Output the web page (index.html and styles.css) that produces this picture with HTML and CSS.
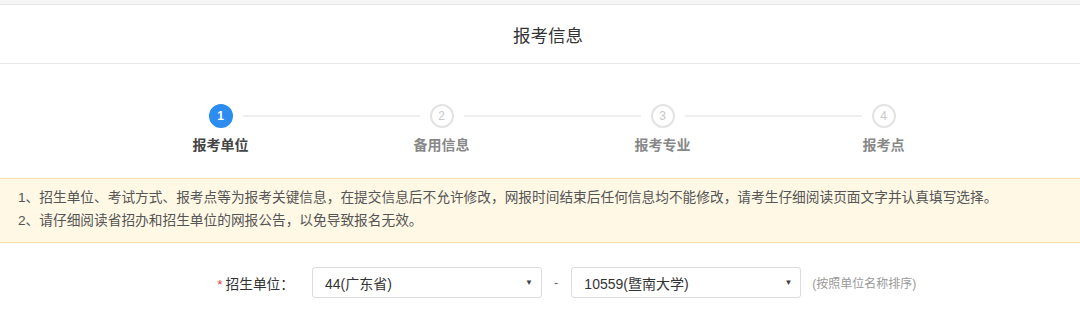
FILE: index.html
```html
<!DOCTYPE html>
<html lang="zh-CN">
<head>
<meta charset="utf-8">
<link rel="stylesheet" href="styles.css">
</head>
<body>
<div class="topstrip"></div>
<header class="header"><h1 class="title">报考信息</h1></header>
<div class="steps">
  <div class="step active">
    <div class="track"><span class="line"></span><span class="circle">1</span><span class="line"></span></div>
    <div class="label">报考单位</div>
  </div>
  <div class="step">
    <div class="track"><span class="line"></span><span class="circle">2</span><span class="line"></span></div>
    <div class="label">备用信息</div>
  </div>
  <div class="step">
    <div class="track"><span class="line"></span><span class="circle">3</span><span class="line"></span></div>
    <div class="label">报考专业</div>
  </div>
  <div class="step">
    <div class="track"><span class="line"></span><span class="circle">4</span><span class="line"></span></div>
    <div class="label">报考点</div>
  </div>
</div>
<div class="notice">
  <p>1、招生单位、考试方式、报考点等为报考关键信息，在提交信息后不允许修改，网报时间结束后任何信息均不能修改，请考生仔细阅读页面文字并认真填写选择。</p>
  <p>2、请仔细阅读省招办和招生单位的网报公告，以免导致报名无效。</p>
</div>
<div class="form-row">
  <label class="form-label"><span class="req">*</span>招生单位：</label>
  <div class="select"><span>44(广东省)</span><span class="arrow">▼</span></div>
  <span class="dash">-</span>
  <div class="select"><span>10559(暨南大学)</span><span class="arrow">▼</span></div>
  <span class="hint">(按照单位名称排序)</span>
</div>
</body>
</html>
```
FILE: styles.css
```css
* { box-sizing: border-box; }
html, body { margin: 0; padding: 0; }
body {
  width: 1080px;
  height: 318px;
  overflow: hidden;
  background: #fff;
  font-family: "Liberation Sans", "Noto Sans CJK SC", sans-serif;
  color: #333;
}
.topstrip {
  height: 5px;
  background: #f5f5f5;
  border-bottom: 1px solid #e6e6e6;
}
.header {
  height: 59px;
  border-bottom: 1px solid #e6e6e6;
  display: flex;
  align-items: center;
  justify-content: center;
  padding-left: 16px;
}
.title {
  margin: 0;
  font-size: 17.5px;
  font-weight: normal;
  color: #333;
}
.steps {
  display: flex;
  padding: 40px 0 0 110px;
  height: 114px;
}
.step {
  width: 221px;
  display: flex;
  flex-direction: column;
  align-items: center;
}
.track {
  width: 100%;
  display: flex;
  align-items: center;
  height: 24px;
}
.line {
  flex: 1;
  height: 2px;
  background: #eeeeee;
}
.step:first-child .track .line:first-child,
.step:last-child .track .line:last-child { background: transparent; }
.circle {
  width: 24px;
  height: 24px;
  margin: 0 10px;
  border-radius: 50%;
  border: 2px solid #e3e3e3;
  color: #c8c8c8;
  font-size: 12px;
  display: flex;
  align-items: center;
  justify-content: center;
  background: #fff;
}
.step.active .circle {
  background: #2d8cf0;
  border-color: #2d8cf0;
  color: #fff;
  font-weight: bold;
}
.label {
  margin-top: 7px;
  font-size: 14px;
  font-weight: bold;
  color: #888;
  line-height: 20px;
}
.step.active .label { color: #444; }
.notice {
  background: #fef8e5;
  border-top: 1px solid #fde2a4;
  border-bottom: 1px solid #fde2a4;
  padding: 7px 18px 8px;
  height: 65px;
}
.notice p {
  margin: 0;
  font-size: 13.7px;
  line-height: 23px;
  color: #555;
  white-space: nowrap;
}
.form-row {
  display: flex;
  align-items: center;
  margin-top: 24px;
  height: 31px;
}
.form-label {
  width: 294px;
  text-align: right;
  font-size: 13.7px;
  color: #333;
}
.req { color: #e4393c; margin-right: 3px; }
.select {
  margin-left: 18px;
  width: 230px;
  height: 31px;
  border: 1px solid #dcdcdc;
  border-radius: 3px;
  display: flex;
  align-items: center;
  justify-content: space-between;
  padding: 0 8px 0 12px;
  font-size: 14px;
  color: #333;
}
.dash + .select { margin-left: 13px; }
.arrow { font-size: 8px; color: #444; }
.dash {
  margin-left: 12px;
  font-size: 13px;
  color: #666;
}
.hint {
  margin-left: 11px;
  font-size: 12px;
  color: #999;
}
```
